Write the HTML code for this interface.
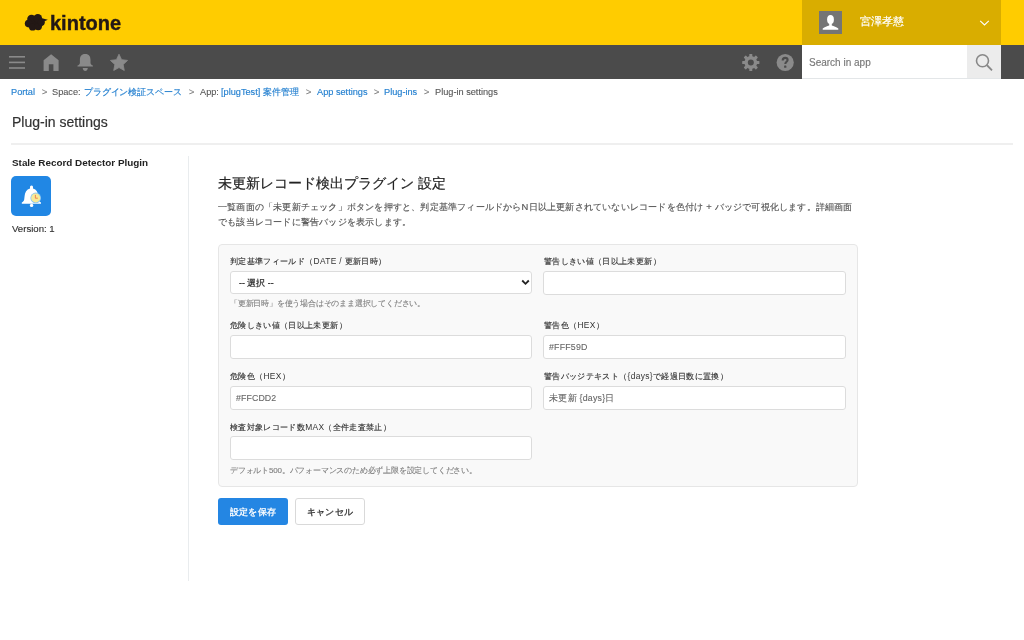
<!DOCTYPE html>
<html lang="ja">
<head>
<meta charset="utf-8">
<style>
html,body{margin:0;padding:0;}
body{width:1024px;height:640px;overflow:hidden;background:#fff;position:relative;font-family:"Liberation Sans",sans-serif;color:#333;}
.abs{position:absolute;will-change:transform;}
#hdr{left:0;top:0;width:1024px;height:45px;background:#ffcc00;}
#user{left:802px;top:0;width:199px;height:45px;background:#d9ad00;}
#avatar{left:819px;top:11px;width:23px;height:23px;background:#757575;overflow:hidden;}
#uname{left:860px;top:14px;font-size:11px;line-height:14px;color:#fff;white-space:nowrap;-webkit-text-stroke:0.2px #fff;}
#nav{left:0;top:45px;width:1024px;height:34px;background:#4b4b4b;}
#search{left:802px;top:45px;width:165px;height:34px;background:#fff;}
#sph{left:808.5px;top:56px;font-size:10px;line-height:13px;color:#777;white-space:nowrap;-webkit-text-stroke:0.15px #777;}
#sbtn{left:967px;top:45px;width:34px;height:34px;background:#ececec;}
.cr{top:86px;font-size:9.2px;line-height:12px;white-space:nowrap;color:#555;-webkit-text-stroke:0.1px #555;}
.lt{-webkit-text-stroke:0;}
.cr.lk{color:#2580d0;-webkit-text-stroke:0.15px #2580d0;}
.cr.sp{color:#888;}
#ptitle{left:12px;top:113.5px;font-size:14px;line-height:16px;color:#333;white-space:nowrap;-webkit-text-stroke:0.2px #333;}
#hr{left:11px;top:143px;width:1002px;height:2px;background:#efefef;}
#pname{left:12px;top:157px;font-size:9.9px;line-height:12px;font-weight:bold;color:#222;white-space:nowrap;}
#picon{left:11px;top:176px;width:40px;height:40px;border-radius:5px;background:#2187e4;}
#pver{left:12px;top:223px;font-size:9.6px;line-height:12px;color:#333;white-space:nowrap;-webkit-text-stroke:0.15px #333;}
#divider{left:188px;top:156px;width:1px;height:425px;background:#e9ecee;}
#ctitle{left:218px;top:174px;font-size:14px;line-height:18px;color:#222;white-space:nowrap;-webkit-text-stroke:0.2px #222;}
.desc{left:218px;top:200px;font-size:9.4px;line-height:14px;color:#555;white-space:nowrap;letter-spacing:0.2px;-webkit-text-stroke:0.15px #555;}
#panel{box-sizing:border-box;left:218px;top:244px;width:640px;height:243px;background:#f9f9f9;border:1px solid #e6e6e6;border-radius:4px;}
.lbl{font-size:8.4px;line-height:11px;color:#333;white-space:nowrap;letter-spacing:0.35px;-webkit-text-stroke:0.15px #333;}
.inp{box-sizing:border-box;width:302px;height:24px;background:#fff;border:1px solid #dcdcdc;border-radius:3px;}
.inp.c2{left:543px;width:303px;}
.val{font-size:8.8px;line-height:11px;color:#666;white-space:nowrap;-webkit-text-stroke:0.1px #666;}
.hint{font-size:8px;line-height:10px;color:#808080;white-space:nowrap;letter-spacing:-0.2px;-webkit-text-stroke:0.12px #808080;}
#btnsave{left:218px;top:498px;width:70px;height:27px;background:#2486e3;border-radius:3px;color:#fff;font-size:9.4px;line-height:27px;text-align:center;letter-spacing:0.2px;-webkit-text-stroke:0.3px #fff;}
#btncancel{box-sizing:border-box;left:295px;top:498px;width:70px;height:27px;background:#fff;border:1px solid #d9d9d9;border-radius:3px;color:#333;font-size:9.4px;line-height:25px;text-align:center;letter-spacing:0.2px;-webkit-text-stroke:0.3px #333;}
svg{display:block;}
</style>
</head>
<body>
<div id="hdr" class="abs"></div>
<!-- logo -->
<svg class="abs" style="left:24px;top:13px" width="26" height="19" viewBox="0 0 26 19">
<g fill="#231815">
<ellipse cx="11.5" cy="9.8" rx="8" ry="6.5"/>
<circle cx="7.5" cy="6" r="4.3"/>
<circle cx="13.8" cy="5.2" r="4.3"/>
<circle cx="4.6" cy="10.6" r="3.8"/>
<circle cx="8.6" cy="14" r="3.6"/>
<circle cx="14.2" cy="13.6" r="3.7"/>
<circle cx="17.3" cy="9.2" r="3.5"/>
<path d="M18 5.2 L23.8 6.7 L18.5 9.2 Z"/>
</g>
</svg>
<div class="abs" style="left:49.6px;top:10.8px;font-size:20px;line-height:24px;font-weight:bold;color:#231815;white-space:nowrap;letter-spacing:0px;-webkit-text-stroke:0.4px #231815">kintone</div>

<div id="user" class="abs"></div>
<div id="avatar" class="abs">
<svg width="23" height="23" viewBox="0 0 23 23"><ellipse cx="11.5" cy="8.4" rx="3.4" ry="4.5" fill="#fff"/><path d="M10.2 11.5 L12.8 11.5 L12.8 14.6 C14.8 15.2 17.5 16.3 19.3 17.6 L19.3 18.8 L3.7 18.8 L3.7 17.6 C5.5 16.3 8.2 15.2 10.2 14.6 Z" fill="#fff"/></svg>
</div>
<div id="uname" class="abs">宮澤孝慈</div>
<svg class="abs" style="left:979px;top:19px" width="11" height="8" viewBox="0 0 11 8"><path d="M1.2 1.8 L5.5 6 L9.8 1.8" stroke="#fff" stroke-width="1.1" fill="none"/></svg>

<div id="nav" class="abs"></div>
<!-- hamburger -->
<svg class="abs" style="left:8px;top:55px" width="18" height="15" viewBox="0 0 18 15">
<rect x="1" y="1" width="16" height="1.6" fill="#8a8a8a"/><rect x="1" y="6.6" width="16" height="1.6" fill="#8a8a8a"/><rect x="1" y="12.2" width="16" height="1.6" fill="#8a8a8a"/>
</svg>
<!-- home -->
<svg class="abs" style="left:43px;top:54px" width="16" height="17" viewBox="0 0 16 17">
<path fill="#8a8a8a" d="M8.1 0.2 L15.6 6.2 L15.6 17 L10.4 17 L10.4 10.2 L5.8 10.2 L5.8 17 L0.6 17 L0.6 6.2 Z"/>
</svg>
<!-- bell -->
<svg class="abs" style="left:77px;top:53px" width="17" height="19" viewBox="0 0 17 19">
<path fill="#8a8a8a" d="M8.2 0.9 C4.2 0.9 2.9 3.4 2.9 6.8 L2.9 10 C2.9 11.2 1.8 12.2 0.5 12.5 L0.5 13.6 L15.9 13.6 L15.9 12.5 C14.6 12.2 13.5 11.2 13.5 10 L13.5 6.8 C13.5 3.4 12.2 0.9 8.2 0.9 Z"/>
<path fill="#8a8a8a" d="M5.7 15.1 L10.8 15.1 C10.6 17 9.6 18 8.25 18 C6.9 18 5.9 17 5.7 15.1 Z"/>
</svg>
<!-- star -->
<svg class="abs" style="left:110px;top:53px" width="18" height="19" viewBox="0 0 18 19">
<path fill="#8a8a8a" stroke="#8a8a8a" stroke-width="0.8" stroke-linejoin="round" d="M9.00 1.20 L11.59 6.64 L17.56 7.42 L13.18 11.56 L14.29 17.48 L9.00 14.60 L3.71 17.48 L4.82 11.56 L0.44 7.42 L6.41 6.64 Z"/>
</svg>
<!-- gear -->
<svg class="abs" style="left:741px;top:53px" width="20" height="20" viewBox="0 0 20 20">
<g fill="#8a8a8a" transform="translate(9.8 9.5)">
<circle r="6.4"/>
<rect x="-1.5" y="-8.6" width="3" height="4" rx="0.6" transform="rotate(0)"/><rect x="-1.5" y="-8.6" width="3" height="4" rx="0.6" transform="rotate(45)"/><rect x="-1.5" y="-8.6" width="3" height="4" rx="0.6" transform="rotate(90)"/><rect x="-1.5" y="-8.6" width="3" height="4" rx="0.6" transform="rotate(135)"/><rect x="-1.5" y="-8.6" width="3" height="4" rx="0.6" transform="rotate(180)"/><rect x="-1.5" y="-8.6" width="3" height="4" rx="0.6" transform="rotate(225)"/><rect x="-1.5" y="-8.6" width="3" height="4" rx="0.6" transform="rotate(270)"/><rect x="-1.5" y="-8.6" width="3" height="4" rx="0.6" transform="rotate(315)"/>
<circle r="3" fill="#4b4b4b"/>
</g>
</svg>
<!-- help -->
<svg class="abs" style="left:776px;top:53px" width="18" height="19" viewBox="0 0 18 19">
<circle cx="9.2" cy="9.5" r="8.6" fill="#8a8a8a"/>
<path d="M6.7 7.6 C6.7 5.6 7.8 4.9 9.2 4.9 C10.7 4.9 11.6 5.8 11.6 7 C11.6 8.7 9.3 8.9 9.3 11" stroke="#4b4b4b" stroke-width="2.1" fill="none"/>
<rect x="8.1" y="12.6" width="2.3" height="2.2" rx="0.4" fill="#4b4b4b"/>
</svg>
<div id="search" class="abs"></div>
<div id="sph" class="abs">Search in app</div>
<div id="sbtn" class="abs"></div>
<svg class="abs" style="left:974px;top:53px" width="20" height="19" viewBox="0 0 20 19">
<circle cx="8.5" cy="7.7" r="6" stroke="#888" stroke-width="1.6" fill="none"/>
<path d="M12.8 12 L18 17.3" stroke="#888" stroke-width="1.8"/>
</svg>
<div class="abs" style="left:802px;top:78px;width:199px;height:1px;background:#e3e6e8"></div>

<!-- breadcrumb -->
<div class="abs cr lk" id="c1" style="left:11px">Portal</div>
<div class="abs cr sp" id="s1" style="left:41.5px">&gt;</div>
<div class="abs cr" id="c2" style="left:52.4px">Space:</div>
<div class="abs cr lk jp" id="c3" style="left:84.3px;letter-spacing:-0.15px">プラグイン検証スペース</div>
<div class="abs cr sp" id="s2" style="left:188.6px">&gt;</div>
<div class="abs cr" id="c4" style="left:200px">App:</div>
<div class="abs cr lk" id="c5" style="left:221.1px">[plugTest]</div>
<div class="abs cr lk jp" id="c6" style="left:262.5px;letter-spacing:0.1px">案件管理</div>
<div class="abs cr sp" id="s3" style="left:305.8px">&gt;</div>
<div class="abs cr lk" id="c7" style="left:317px">App settings</div>
<div class="abs cr sp" id="s4" style="left:373.6px">&gt;</div>
<div class="abs cr lk" id="c8" style="left:384.3px">Plug-ins</div>
<div class="abs cr sp" id="s5" style="left:424.4px">&gt;</div>
<div class="abs cr" id="c9" style="left:434.9px">Plug-in settings</div>

<div id="ptitle" class="abs">Plug-in settings</div>
<div id="hr" class="abs"></div>

<div id="pname" class="abs">Stale Record Detector Plugin</div>
<div id="picon" class="abs">
<svg width="40" height="40" viewBox="0 0 40 40">
<path fill="#fff" d="M20.6 9.6 C21.6 9.6 22 10.4 22 11.2 L22 12.6 C25.5 13.6 27 16.5 27.3 20 L27.6 23.5 C27.8 25 28.8 25.8 30 26.4 L30 27.8 L10.8 27.8 L10.8 26.4 C12 25.8 13 25 13.2 23.5 L13.6 20 C13.9 16.5 15.5 13.6 19 12.6 L19 11.2 C19 10.4 19.6 9.6 20.6 9.6 Z"/>
<circle cx="20.6" cy="29.4" r="1.7" fill="#fff"/>
<circle cx="24.7" cy="21.9" r="5.3" fill="#8cc6f2"/>
<circle cx="24.7" cy="21.9" r="4.5" fill="#f7ea98"/>
<path d="M24.4 18.9 L24.4 22.2 L26.8 22.2" stroke="#ef7a4a" stroke-width="0.9" fill="none"/>
</svg>
</div>
<div id="pver" class="abs">Version: 1</div>
<div id="divider" class="abs"></div>

<div id="ctitle" class="abs">未更新レコード検出プラグイン 設定</div>
<div id="desc1" class="abs desc">一覧画面の「未更新チェック」ボタンを押すと、判定基準フィールドからN日以上更新されていないレコードを色付け + バッジで可視化します。詳細画面</div>
<div id="desc2" class="abs desc" style="top:214.6px">でも該当レコードに警告バッジを表示します。</div>

<div id="panel" class="abs"></div>
<!-- row1 -->
<div id="l1" class="abs lbl" style="left:230px;top:256px">判定基準フィールド（<span class="lt">DATE / </span>更新日時）</div>
<div class="abs inp" style="left:230px;top:271px;height:23px"></div>
<div id="selv" class="abs val" style="left:239px;top:277.5px;color:#222;-webkit-text-stroke:0.2px #222">-- 選択 --</div>
<svg class="abs" style="left:521px;top:279px" width="9" height="7" viewBox="0 0 9 7"><path d="M1.2 1.5 L4.5 4.8 L7.8 1.5" stroke="#222" stroke-width="1.8" fill="none"/></svg>
<div id="h1" class="abs hint" style="left:230px;top:299px">「更新日時」を使う場合はそのまま選択してください。</div>

<div id="l2" class="abs lbl" style="left:543.5px;top:256px">警告しきい値（日以上未更新）</div>
<div class="abs inp c2" style="top:271px"></div>

<!-- row2 -->
<div id="l3" class="abs lbl" style="left:230px;top:320px">危険しきい値（日以上未更新）</div>
<div class="abs inp" style="left:230px;top:335px"></div>
<div id="l4" class="abs lbl" style="left:543.5px;top:320px">警告色（<span class="lt">HEX</span>）</div>
<div class="abs inp c2" style="top:335px"></div>
<div id="v4" class="abs val" style="left:549px;top:341.5px;letter-spacing:0.2px">#FFF59D</div>

<!-- row3 -->
<div id="l5" class="abs lbl" style="left:230px;top:371px">危険色（<span class="lt">HEX</span>）</div>
<div class="abs inp" style="left:230px;top:386px"></div>
<div id="v5" class="abs val" style="left:236px;top:392.5px;letter-spacing:0.1px">#FFCDD2</div>
<div id="l6" class="abs lbl" style="left:543.5px;top:371px">警告バッジテキスト（<span class="lt">{days}</span>で経過日数に置換）</div>
<div class="abs inp c2" style="top:386px"></div>
<div id="v6" class="abs val" style="left:549px;top:392.5px;letter-spacing:0.25px">未更新 {days}日</div>

<!-- row4 -->
<div id="l7" class="abs lbl" style="left:230px;top:422px">検査対象レコード数<span class="lt">MAX</span>（全件走査禁止）</div>
<div class="abs inp" style="left:230px;top:436px"></div>
<div id="h2" class="abs hint" style="left:230px;top:466px">デフォルト500。パフォーマンスのため必ず上限を設定してください。</div>

<div id="btnsave" class="abs">設定を保存</div>
<div id="btncancel" class="abs">キャンセル</div>
</body>
</html>
